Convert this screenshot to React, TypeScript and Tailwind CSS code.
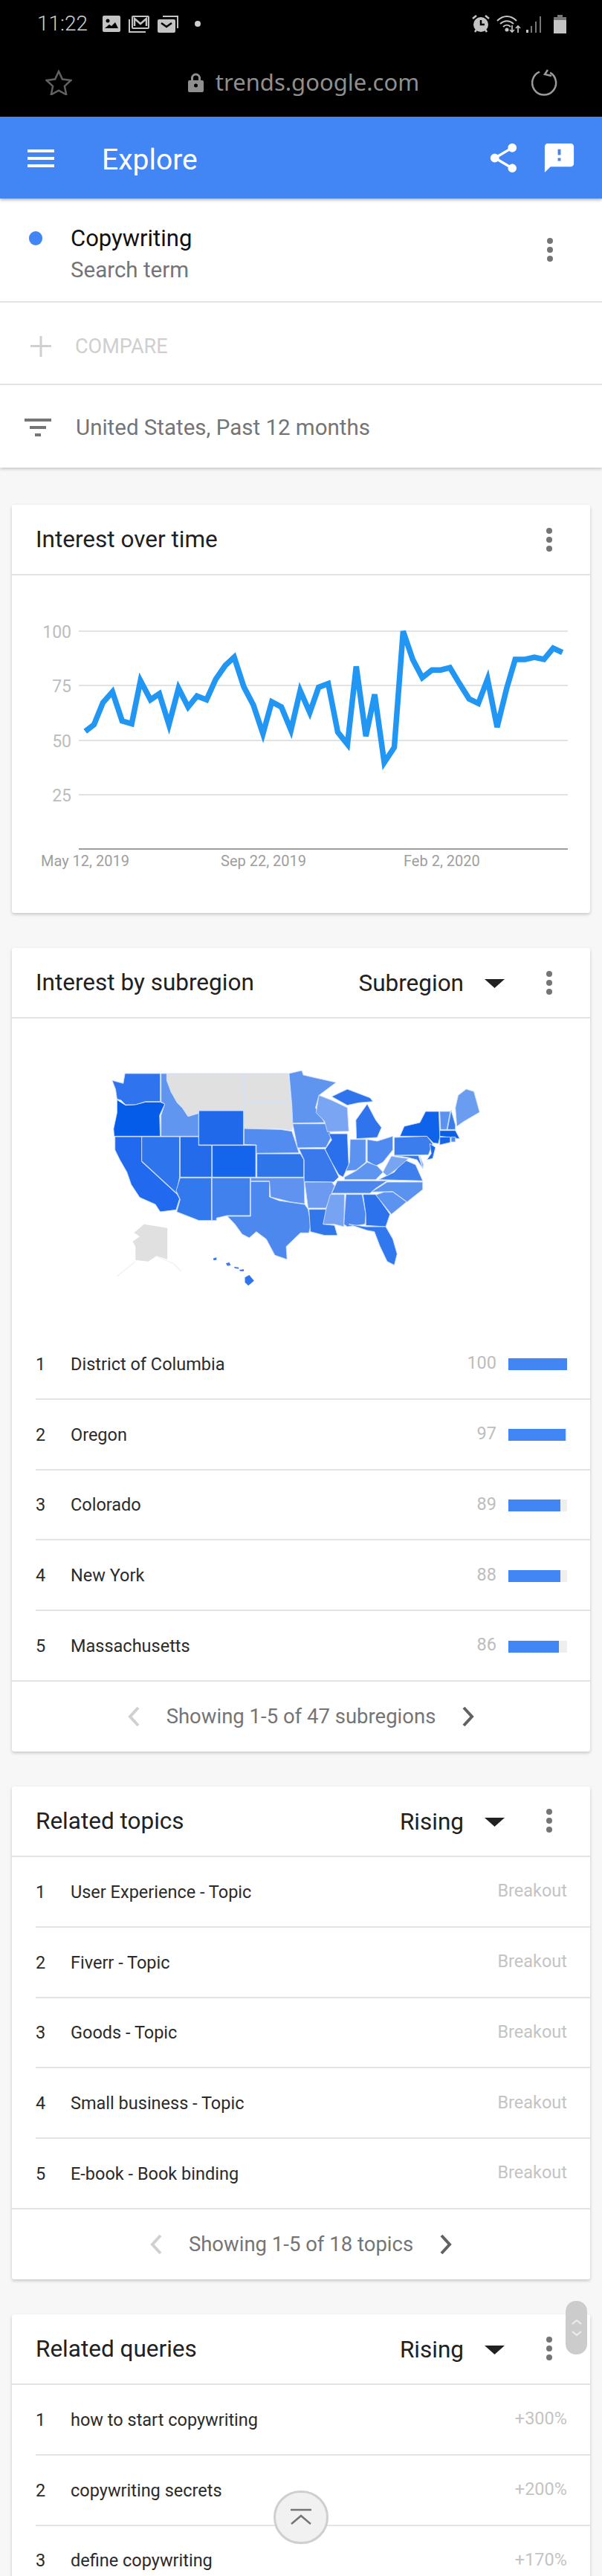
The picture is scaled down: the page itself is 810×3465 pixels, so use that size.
import React from "react";

const LINE = [
  [222, 842], [245, 820], [268, 748], [293, 712], [318, 808], [343, 817], [366, 675], [392, 738], [415, 718], [440, 820],
  [465, 700], [490, 762], [513, 726], [538, 738], [562, 670], [587, 625], [610, 598], [635, 695], [660, 755], [685, 850],
  [708, 745], [733, 762], [758, 838], [782, 708], [807, 780], [830, 697], [855, 685], [880, 845], [905, 885], [928, 628],
  [953, 858], [976, 720], [1001, 945], [1027, 895], [1050, 512], [1075, 605], [1100, 665], [1125, 640], [1148, 640], [1172, 632],
  [1197, 685], [1222, 735], [1246, 750], [1270, 670], [1295, 828], [1320, 700], [1342, 605], [1368, 605], [1392, 598], [1417, 605],
  [1441, 568], [1465, 582],
];

// state shapes, coords taken off the zoomed map
const STATES: [string, string][] = [
  ["#2f73ee", "133,100 172,112 178,72 302,72 302,185 250,185 215,198 180,198 165,180 150,175 145,135"],
  ["#6096f0", "305,72 325,72 325,100 340,145 362,190 380,210 400,245 437,232 437,325 305,325 305,240 318,195 305,185"],
  ["#e0e0e0", "327,72 595,72 595,220 438,222 437,232 400,245 380,210 362,190 340,145 327,100"],
  ["#e0e0e0", "597,72 752,72 762,185 597,185"],
  ["#e0e0e0", "597,187 762,187 768,272 765,300 725,294 597,292"],
  ["#1f69ea", "438,222 595,222 595,360 438,360"],
  ["#045ce8", "150,178 180,200 215,198 250,187 302,187 318,195 300,240 302,325 140,325 138,295 150,230"],
  ["#2169ef", "143,327 237,327 237,428 362,560 370,578 358,622 302,630 285,600 230,572 200,520 185,470 160,420 143,380"],
  ["#2e74ec", "237,327 370,327 370,490 360,555 237,425"],
  ["#246bec", "372,327 437,327 437,362 483,362 483,490 372,490"],
  ["#1465ec", "485,362 638,362 638,490 485,490"],
  ["#3279ee", "372,493 482,493 482,665 438,665 360,630 372,580 358,545"],
  ["#4081ee", "484,493 618,493 618,645 537,645 500,655 500,665 484,665"],
  ["#4d88ef", "620,508 686,508 686,570 720,585 810,600 822,620 832,680 825,715 795,715 745,770 748,822 705,805 675,740 640,710 615,735 590,720 565,680 538,648 620,648"],
  ["#5f93ef", "620,493 808,493 810,598 760,590 690,570 686,506 620,506"],
  ["#2f75ea", "642,396 795,396 807,420 807,490 642,490"],
  ["#538cf0", "597,294 725,298 765,305 778,350 790,392 640,394 640,360 597,358"],
  ["#5f95ef", "755,72 800,60 805,78 850,90 920,108 860,160 848,210 880,270 768,272 765,200"],
  ["#598fef", "768,275 885,275 905,325 885,370 785,372"],
  ["#3a79ec", "790,376 880,376 905,430 930,490 912,510 808,508 808,420"],
  ["#6b9af0", "810,510 905,510 915,525 885,615 822,615"],
  ["#3176ea", "825,620 885,620 885,640 875,680 915,685 925,725 880,725 830,710"],
  ["#79a5f2", "860,160 905,180 960,210 965,305 890,307 880,265 850,230"],
  ["#2a70ed", "895,315 960,315 965,440 945,490 930,480 905,430 882,378 905,340"],
  ["#5c93f0", "970,338 1025,338 1025,430 990,462 955,465 968,430"],
  ["#2f74ec", "992,335 990,260 1030,195 1060,260 1080,290 1065,330"],
  ["#2f74ec", "905,165 960,135 1040,170 1050,185 1000,190 960,200"],
  ["#4f8af0", "1030,338 1065,345 1120,325 1120,380 1085,430 1060,445 1030,425"],
  ["#5d95f0", "950,490 990,465 1030,430 1065,445 1085,470 1060,500 950,500"],
  ["#4a86ee", "925,505 1100,505 1060,535 1040,555 905,555"],
  ["#76a3f2", "900,560 950,560 948,690 915,680 875,680 885,620"],
  ["#4b87ef", "955,560 1012,560 1025,640 1022,680 960,690 948,680"],
  ["#2c72ec", "1015,560 1060,560 1110,640 1095,690 1025,685 1025,640"],
  ["#3178ee", "965,680 1025,690 1095,690 1120,740 1135,800 1125,845 1100,830 1075,770 1055,710 1030,705"],
  ["#5c93f0", "1060,562 1090,550 1120,550 1168,590 1115,640"],
  ["#5a92ef", "1045,550 1100,510 1225,510 1225,540 1170,590 1120,548"],
  ["#3e7fed", "1070,500 1125,470 1160,420 1200,440 1225,505"],
  ["#78a5f2", "1085,470 1115,405 1140,410 1175,415 1130,460 1100,485"],
  ["#3b7ded", "1125,330 1240,325 1260,355 1245,400 1125,402"],
  ["#0f62ea", "1145,325 1160,285 1215,270 1235,225 1282,225 1285,330 1280,355 1262,352 1240,325"],
  ["#1b68ea", "1250,355 1270,370 1260,415 1240,420 1255,395"],
  ["#3378ee", "1125,403 1210,403 1225,455 1205,420 1170,410"],
  ["#7caaf3", "1215,405 1228,440 1225,455"],
  ["#5a92ef", "1285,225 1322,225 1310,298 1288,298"],
  ["#3a7cec", "1325,220 1340,280 1340,298 1312,298"],
  ["#6a9cf0", "1340,210 1350,160 1378,135 1405,145 1425,228 1370,265 1345,285"],
  ["#0a5de5", "1285,302 1340,302 1355,335 1285,325"],
  ["#1664e8", "1285,328 1322,328 1322,350 1285,360"],
  ["#4f8aef", "1325,328 1340,328 1340,348 1325,348"],
];

const SUBREGIONS = [
  { name: "District of Columbia", value: 100, bar: 79 },
  { name: "Oregon", value: 97, bar: 77 },
  { name: "Colorado", value: 89, bar: 70 },
  { name: "New York", value: 88, bar: 70 },
  { name: "Massachusetts", value: 86, bar: 68 },
];

const TOPICS = ["User Experience - Topic", "Fiverr - Topic", "Goods - Topic", "Small business - Topic", "E-book - Book binding"];

const QUERIES = [
  { name: "how to start copywriting", value: "+300%" },
  { name: "copywriting secrets", value: "+200%" },
  { name: "define copywriting", value: "+170%" },
];

function Kebab() {
  return (
    <svg width="10" height="34" viewBox="0 0 10 34" className="shrink-0">
      <circle cx="5" cy="5" r="4" fill="#757575" />
      <circle cx="5" cy="17" r="4" fill="#757575" />
      <circle cx="5" cy="29" r="4" fill="#757575" />
    </svg>
  );
}

function Caret() {
  return (
    <svg width="28" height="14" viewBox="0 0 28 14" className="shrink-0">
      <path d="M0 1h27L13.5 13z" fill="#212121" />
    </svg>
  );
}

function CardHeader({ title, select }: { title: string; select?: string }) {
  return (
    <div className="h-[95px] flex items-center pl-8 pr-[50px] border-b-2 border-[#e4e4e4]">
      <div className="text-[31.5px] text-[#212121]">{title}</div>
      {select && <div className="ml-auto mt-[3px] text-[31.5px] text-[#212121]">{select}</div>}
      {select && (
        <div className="ml-7 mr-[54px] mt-[3px]">
          <Caret />
        </div>
      )}
      <div className={select ? "" : "ml-auto"}>
        <Kebab />
      </div>
    </div>
  );
}

function Row({ rank, name, last, children }: { rank: number; name: string; last?: boolean; children: React.ReactNode }) {
  return (
    <div className={last ? "pl-0" : "pl-8"}>
      <div className={`h-[94.8px] flex items-center pt-[2px] pr-[31px] border-b-2 border-[#e4e4e4] text-[23.5px] text-[#2b2b2b] ${last ? "pl-8" : ""}`}>
        <div className="w-[47px]">{rank}</div>
        <div>{name}</div>
        <div className="ml-auto flex items-center">{children}</div>
      </div>
    </div>
  );
}

function Pager({ text }: { text: string }) {
  return (
    <div className="h-[94px] flex items-center justify-center gap-[36px]">
      <svg width="16" height="30" viewBox="0 0 16 30">
        <path d="M14 3L3 15l11 12" fill="none" stroke="#d0d0d0" strokeWidth="4" />
      </svg>
      <div className="text-[27.5px] text-[#757575]">{text}</div>
      <svg width="16" height="30" viewBox="0 0 16 30">
        <path d="M2 3l11 12L2 27" fill="none" stroke="#616161" strokeWidth="4" />
      </svg>
    </div>
  );
}

function Card({ children }: { children: React.ReactNode }) {
  return <div className="mx-4 bg-white rounded-[3px] shadow-[0_2px_4px_rgba(0,0,0,0.2)]">{children}</div>;
}

function TrendChart() {
  const ticks = [
    { label: "100", y: 849 },
    { label: "75", y: 922 },
    { label: "50", y: 996 },
    { label: "25", y: 1069 },
  ];
  const pts = LINE.map(([x, y]) => `${(x / 1.936).toFixed(1)},${(640 + y / 2.45).toFixed(1)}`).join(" ");
  return (
    <svg viewBox="16 774 779 454" className="w-[779px] h-[454px] block">
      {ticks.map((t) => (
        <g key={t.label}>
          <line x1="106" x2="764" y1={t.y} y2={t.y} stroke="#e2e2e2" strokeWidth="2" />
          <text x="96" y={t.y + 9} textAnchor="end" fontSize="23" fill="#bdbdbd" fontFamily="Roboto, sans-serif">
            {t.label}
          </text>
        </g>
      ))}
      <line x1="106" x2="764" y1="1142" y2="1142" stroke="#9e9e9e" strokeWidth="2" />
      <polyline points={pts} fill="none" stroke="#2196f3" strokeWidth="7.5" strokeLinejoin="miter" />
      <text x="55" y="1165" fontSize="20" fill="#9e9e9e" fontFamily="Roboto, sans-serif">May 12, 2019</text>
      <text x="297" y="1165" fontSize="20" fill="#9e9e9e" fontFamily="Roboto, sans-serif">Sep 22, 2019</text>
      <text x="543" y="1165" fontSize="20" fill="#9e9e9e" fontFamily="Roboto, sans-serif">Feb 2, 2020</text>
    </svg>
  );
}

function UsMap() {
  return (
    <svg viewBox="0 0 1568 1080" preserveAspectRatio="none" className="w-[600px] h-[360px] block">
      {STATES.map(([fill, points], i) => (
        <polygon key={i} points={points} fill={fill} stroke="#cfdffa" strokeWidth="2.5" />
      ))}
      <polygon points="245,680 327,695 327,822 290,808 260,830 215,825 215,770 205,750 230,730 210,715" fill="#e0e0e0" />
      <path d="M215 830L150 890M290 810l60 30 25 30" fill="none" stroke="#f1f1f1" strokeWidth="4" />
      <polygon points="600,895 615,885 632,908 612,928 600,915" fill="#2f73ee" />
      <polygon points="488,818 500,814 500,824 490,826" fill="#3c7cee" />
      <polygon points="533,838 545,834 550,846 538,848" fill="#3c7cee" />
      <polygon points="562,852 578,854 578,860 564,858" fill="#3c7cee" />
      <polygon points="580,864 596,862 596,870 584,870" fill="#3c7cee" />
    </svg>
  );
}

export default function App() {
  return (
    <div className="relative w-[810px] h-[3465px] overflow-hidden bg-[#f7f7f7] [font-family:Roboto,sans-serif]">
      {/* phone chrome */}
      <div className="bg-black h-[157px]">
        <div className="h-[64px] flex items-center pl-[50px] pr-[48px]">
          <div className="text-[28px] font-light text-[#cfcfcf] w-[88px]">11:22</div>
          <svg width="24" height="22" viewBox="0 0 24 22" className="mr-[10px]">
            <rect width="24" height="22" rx="2" fill="#c4c4c4" />
            <circle cx="7" cy="7" r="2.5" fill="#000" />
            <path d="M3 17l6-5 3 2 5-5 4 8z" fill="#000" />
          </svg>
          <svg width="30" height="24" viewBox="0 0 30 24" className="mr-[10px]" fill="none" stroke="#c4c4c4" strokeWidth="2">
            <path d="M2 6v17h22" />
            <rect x="6" y="2" width="22" height="16" rx="1" />
            <path d="M9 15V5l8 7 8-7v10" strokeWidth="2.5" />
          </svg>
          <svg width="28" height="23" viewBox="0 0 28 23" className="mr-[22px]">
            <path d="M7 1h20v16" fill="none" stroke="#c4c4c4" strokeWidth="2" />
            <rect x="0" y="5" width="24" height="18" rx="2" fill="#c4c4c4" />
            <path d="M5 10l7 5 7-5" fill="none" stroke="#000" strokeWidth="2.5" />
          </svg>
          <div className="w-2 h-2 rounded-full bg-[#cfcfcf]" />
          <svg width="26" height="26" viewBox="0 0 26 26" className="ml-auto mr-[8px]">
            <circle cx="13" cy="14" r="10" fill="#c4c4c4" />
            <path d="M13 8v6h5" fill="none" stroke="#000" strokeWidth="2.5" />
            <path d="M2 6l5-4M24 6l-5-4M5 24l2-3M21 24l-2-3" stroke="#c4c4c4" strokeWidth="2.5" />
          </svg>
          <svg width="33" height="25" viewBox="0 0 33 25" className="mr-[7px]" fill="none" stroke="#c4c4c4" strokeWidth="2">
            <path d="M1 8c8-8 18-8 26 0M5 12c6-5 12-5 18 0M9 16c3-3 7-3 10 0" />
            <circle cx="14" cy="20" r="1.5" fill="#c4c4c4" />
            <path d="M21 14v9M18 20l3 3 3-3M29 24v-9M26 18l3-3 3 3" strokeWidth="1.7" />
          </svg>
          <svg width="22" height="23" viewBox="0 0 22 23" className="mr-[15px]">
            <rect x="0" y="19" width="3" height="4" fill="#c4c4c4" />
            <rect x="6" y="14" width="2" height="9" fill="#777" />
            <rect x="12" y="8" width="2" height="15" fill="#777" />
            <rect x="18" y="1" width="2" height="22" fill="#777" />
          </svg>
          <svg width="17" height="25" viewBox="0 0 17 25">
            <path d="M5 0h7v3h5v22H0V3h5z" fill="#c4c4c4" />
            <path d="M5 0h7v3h5v4H0V3h5z" fill="#777" />
          </svg>
        </div>
        <div className="h-[93px] flex items-center pl-[61px] pr-[59px]">
          <svg width="36" height="34" viewBox="0 0 36 34" fill="none" stroke="#616161" strokeWidth="2.5">
            <path d="M18 2l4.9 10.6 11.6 1.4-8.6 7.9 2.3 11.4L18 27.6 7.8 33.3l2.3-11.4L1.5 14l11.6-1.4z" />
          </svg>
          <div className="flex-1 flex items-center justify-center gap-[15px] pl-[4px]">
            <svg width="23" height="26" viewBox="0 0 23 26">
              <path d="M3 10h2V7a6.5 6.5 0 0 1 13 0v3h2a2 2 0 0 1 2 2v12a2 2 0 0 1-2 2H3a2 2 0 0 1-2-2V12a2 2 0 0 1 2-2zm5 0h7V7a3.5 3.5 0 0 0-7 0z" fill="#8f8f8f" />
              <circle cx="11.5" cy="17" r="2.5" fill="#000" />
            </svg>
            <div className="text-[31px] text-[#8f8f8f] [font-family:'Noto_Sans',sans-serif] leading-none">trends.google.com</div>
          </div>
          <svg width="36" height="36" viewBox="0 0 36 36" fill="none" stroke="#9a9a9a" strokeWidth="2.5">
            <path d="M22 3.5A16 16 0 1 1 8 5.5" transform="rotate(12 18 19)" />
            <path d="M22 1l-4 6 9 2" />
          </svg>
        </div>
      </div>

      {/* app bar */}
      <div className="relative z-10 h-[110px] bg-[#4285f4] flex items-center pl-[37px] pr-[34px] shadow-[0_2px_4px_rgba(0,0,0,0.3)]">
        <svg width="36" height="24" viewBox="0 0 36 24" fill="#fff" className="mt-[2px]">
          <rect width="36" height="4" />
          <rect y="10" width="36" height="4" />
          <rect y="20" width="36" height="4" />
        </svg>
        <div className="ml-[64px] mt-[7px] text-[39px] text-white">Explore</div>
        <svg width="47" height="47" viewBox="0 0 24 24" fill="#fff" className="ml-auto">
          <path d="M18 16.08c-.76 0-1.44.3-1.96.77L8.91 12.7c.05-.23.09-.46.09-.7s-.04-.47-.09-.7l7.05-4.11c.54.5 1.25.81 2.04.81 1.66 0 3-1.34 3-3s-1.34-3-3-3-3 1.34-3 3c0 .24.04.47.09.7L8.04 9.81C7.5 9.31 6.79 9 6 9c-1.66 0-3 1.34-3 3s1.34 3 3 3c.79 0 1.5-.31 2.04-.81l7.12 4.16c-.05.21-.08.43-.08.65 0 1.61 1.31 2.92 2.92 2.92 1.61 0 2.92-1.31 2.92-2.92s-1.31-2.92-2.92-2.92z" />
        </svg>
        <svg width="47" height="47" viewBox="0 0 24 24" fill="#fff" className="ml-7">
          <path d="M20 2H4c-1.1 0-1.99.9-1.99 2L2 22l4-4h14c1.1 0 2-.9 2-2V4c0-1.1-.9-2-2-2zm-7 12h-2v-2h2v2zm0-4h-2V6h2v4z" />
        </svg>
      </div>

      {/* search term and filters */}
      <div className="bg-white shadow-[0_2px_4px_rgba(0,0,0,0.2)]">
        <div className="h-[140px] flex pl-[39px] pr-[65px] border-b-2 border-[#e4e4e4]">
          <div className="w-[18px] h-[19px] mt-[44px] rounded-full bg-[#4285f4]" />
          <div className="ml-[38px] pt-[35px]">
            <div className="text-[31px] leading-[38px] text-[#111]">Copywriting</div>
            <div className="text-[29.5px] leading-[40px] mt-[3px] text-[#757575]">Search term</div>
          </div>
          <div className="ml-auto self-center">
            <Kebab />
          </div>
        </div>
        <div className="h-[111px] flex items-center pl-[41px] pt-[9px] border-b-2 border-[#e4e4e4]">
          <svg width="28" height="28" viewBox="0 0 28 28" fill="#d0d0d0">
            <rect y="12" width="28" height="3" />
            <rect x="12.5" width="3" height="28" />
          </svg>
          <div className="ml-[32px] text-[27px] text-[#cfcfcf]">COMPARE</div>
        </div>
        <div className="h-[111px] flex items-center pl-[33px] pt-[3px]">
          <svg width="36" height="24" viewBox="0 0 36 24" fill="#757575">
            <rect width="36" height="4" />
            <rect x="7" y="10" width="22" height="4" />
            <rect x="14" y="20" width="8" height="4" />
          </svg>
          <div className="ml-[33px] text-[29.5px] text-[#757575]">United States, Past 12 months</div>
        </div>
      </div>

      <div className="pt-[50px] flex flex-col gap-[47px]">
        <Card>
          <CardHeader title="Interest over time" />
          <TrendChart />
        </Card>

        <Card>
          <CardHeader title="Interest by subregion" select="Subregion" />
          <div className="h-[418px] pt-[50px] pl-[84px]">
            <UsMap />
          </div>
          {SUBREGIONS.map((s, i) => (
            <Row key={s.name} rank={i + 1} name={s.name} last={i === 4}>
              <div className="text-[#bdbdbd] mr-4 -mt-[3px]">{s.value}</div>
              <div className="w-[79px] h-4 bg-[#eeeeee]">
                <div className="h-full bg-[#4285f4]" style={{ width: s.bar }} />
              </div>
            </Row>
          ))}
          <Pager text="Showing 1-5 of 47 subregions" />
        </Card>

        <Card>
          <CardHeader title="Related topics" select="Rising" />
          {TOPICS.map((t, i) => (
            <Row key={t} rank={i + 1} name={t} last={i === 4}>
              <div className="text-[#c4c4c4] -mt-[3px]">Breakout</div>
            </Row>
          ))}
          <Pager text="Showing 1-5 of 18 topics" />
        </Card>

        <Card>
          <CardHeader title="Related queries" select="Rising" />
          {QUERIES.map((q, i) => (
            <Row key={q.name} rank={i + 1} name={q.name}>
              <div className="text-[#c4c4c4] -mt-[3px]">{q.value}</div>
            </Row>
          ))}
        </Card>
      </div>

      {/* browser overlays */}
      <div className="absolute left-[761px] top-[3095px] w-[29px] h-[72px] rounded-[14px] bg-[#cccccc] flex flex-col items-center justify-center gap-[8px]">
        <svg width="16" height="8" viewBox="0 0 16 8" fill="none" stroke="#eee" strokeWidth="2">
          <path d="M2 7l6-5 6 5" />
        </svg>
        <svg width="16" height="8" viewBox="0 0 16 8" fill="none" stroke="#eee" strokeWidth="2">
          <path d="M2 1l6 5 6-5" />
        </svg>
      </div>
      <div className="absolute left-[368px] top-[3350px] w-[74px] h-[72px] rounded-full bg-[#f1f1f1] border-[3px] border-[#cfcfcf] flex items-center justify-center">
        <svg width="30" height="24" viewBox="0 0 30 24" fill="none" stroke="#757575" strokeWidth="2.5">
          <path d="M1 2h28M2 21L15 10l13 11" />
        </svg>
      </div>
    </div>
  );
}
